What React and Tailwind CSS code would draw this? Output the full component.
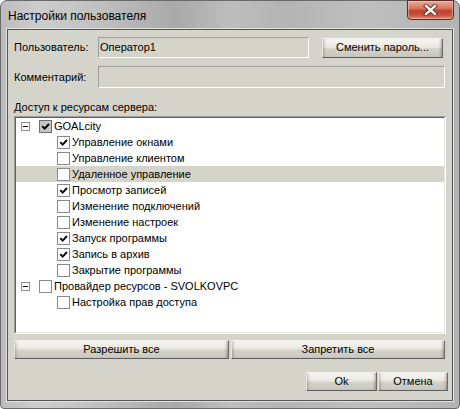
import React from "react";

function Check({ state }) {
  if (state === "gray") {
    return (
      <span className="w-[13px] h-[13px] shrink-0 border border-[#6e6e6e] bg-[#c6c6c6] flex items-center justify-center">
        <svg width="9" height="9" viewBox="0 0 9 9">
          <path d="M1.2 4.2 L3.6 6.6 L8 2" stroke="#000" strokeWidth="1.9" fill="none" />
        </svg>
      </span>
    );
  }
  if (state === "on") {
    return (
      <span className="w-[13px] h-[13px] shrink-0 border border-[#8a8a8a] bg-white flex items-center justify-center">
        <svg width="9" height="9" viewBox="0 0 9 9">
          <path d="M1.2 4.2 L3.6 6.6 L8 2" stroke="#000" strokeWidth="1.9" fill="none" />
        </svg>
      </span>
    );
  }
  return <span className="w-[13px] h-[13px] shrink-0 border border-[#8a8a8a] bg-white" />;
}

function Expander() {
  return (
    <span className="relative w-[9px] h-[9px] shrink-0 border border-[#8f8f8f] bg-white">
      <span className="absolute left-[1px] top-[3px] w-[5px] h-[1px] bg-black" />
    </span>
  );
}

function Row({ level, state, label, hl }) {
  return (
    <div className={hl ? "h-[16px] flex items-center bg-[#d5d4cb]" : "h-[16px] flex items-center"}>
      {level === 0 ? (
        <>
          <span className="w-[5px]" />
          <Expander />
          <span className="w-[9px]" />
          <Check state={state} />
        </>
      ) : (
        <>
          <span className="w-[41px]" />
          <Check state={state} />
        </>
      )}
      <span className="ml-[2px] text-[11px] leading-[13px] text-black whitespace-nowrap">{label}</span>
    </div>
  );
}

function Btn({ children, className }) {
  return (
    <div
      className={
        "flex items-center justify-center text-[11px] leading-[13px] text-black border border-t-[#f4f4f0] border-l-[#e8e8e2] border-b-[#5e5e5e] border-r-[#6a6a6a] bg-[linear-gradient(to_bottom,#f6f5f1_0%,#e9e8e1_45%,#d3d2c8_55%,#c9c8be_100%)] shadow-[inset_3px_0_3px_-2px_rgba(0,0,0,0.25),inset_-3px_0_3px_-2px_rgba(0,0,0,0.35)] " +
        className
      }
    >
      {children}
    </div>
  );
}

function Field({ className, children }) {
  return (
    <div
      className={
        "border border-t-[#9d9d9d] border-l-[#9d9d9d] border-b-white border-r-white bg-[#d5d4cb] flex items-center pl-[1px] text-[11px] leading-[13px] text-black " +
        className
      }
    >
      {children}
    </div>
  );
}

export default function App() {
  const rows = [
    { level: 0, state: "gray", label: "GOALcity" },
    { level: 1, state: "on", label: "Управление окнами" },
    { level: 1, state: "off", label: "Управление клиентом" },
    { level: 1, state: "off", label: "Удаленное управление", hl: true },
    { level: 1, state: "on", label: "Просмотр записей" },
    { level: 1, state: "off", label: "Изменение подключений" },
    { level: 1, state: "off", label: "Изменение настроек" },
    { level: 1, state: "on", label: "Запуск программы" },
    { level: 1, state: "on", label: "Запись в архив" },
    { level: 1, state: "off", label: "Закрытие программы" },
    { level: 0, state: "off", label: "Провайдер ресурсов - SVOLKOVPC" },
    { level: 1, state: "off", label: "Настройка прав доступа" },
  ];

  return (
    <div className="w-[460px] h-[409px] font-['Liberation_Sans',Arial,sans-serif] bg-white">
      <div className="w-[460px] h-[409px] rounded-t-[7px] rounded-b-[4px] border border-[#6a6a6a] bg-[linear-gradient(to_right,#bcbcbc_0%,#cdcdcd_8%,#c2c2c2_20%,#a9a9a9_38%,#bdbdbd_50%,#b4b4b4_62%,#bfbfbf_80%,#b3b3b3_100%)] flex flex-col">
        <div className="h-[28px] flex items-start justify-between">
          <span className="pl-[7px] pt-[8px] text-[12px] leading-[15px] text-black">Настройки пользователя</span>
          <div className="mr-[5px] -mt-[1px] w-[47px] h-[20px] rounded-b-[4px] border border-[#5b2b22] bg-[linear-gradient(to_bottom,#e9a899_0%,#d9785f_40%,#c2402a_55%,#c9553c_80%,#dc8a6d_100%)] flex items-center justify-center shadow-[inset_0_0_0_1px_rgba(255,220,210,0.45)]">
            <svg width="15" height="12" viewBox="0 0 15 12">
              <path d="M3 2 L12 10 M12 2 L3 10" stroke="#4a2a22" strokeWidth="4.2" strokeLinecap="square" />
              <path d="M3 2 L12 10 M12 2 L3 10" stroke="#ffffff" strokeWidth="2.4" strokeLinecap="square" />
            </svg>
          </div>
        </div>
        <div className="mx-[6px] h-[372px] border border-[#535353] bg-[#d5d4cb] flex flex-col shadow-[0_0_0_1px_#e4e4e4]">
          <div className="mt-[7px] pl-[6px] flex items-center">
            <span className="w-[84px] text-[11px] leading-[13px] text-black">Пользователь:</span>
            <Field className="w-[211px] h-[21px]">Оператор1</Field>
            <Btn className="ml-[13px] w-[121px] h-[20px]">Сменить пароль...</Btn>
          </div>
          <div className="mt-[8px] pl-[6px] flex items-center">
            <span className="w-[84px] text-[11px] leading-[13px] text-black">Комментарий:</span>
            <Field className="w-[347px] h-[22px]" />
          </div>
          <div className="mt-[13px] pl-[6px] text-[11px] leading-[13px] text-black">Доступ к ресурсам сервера:</div>
          <div className="mt-[2px] ml-[6px] w-[432px] h-[218px] border border-t-[#9d9d9d] border-l-[#9d9d9d] border-b-white border-r-white">
            <div className="w-full h-full border border-t-[#5f5f5f] border-l-[#5f5f5f] border-b-[#e6e5de] border-r-[#e6e5de] bg-white">
              {rows.map((r, i) => (
                <Row key={i} {...r} />
              ))}
            </div>
          </div>
          <div className="mt-[6px] ml-[6px] flex gap-[2px]">
            <Btn className="w-[215px] h-[19px]">Разрешить все</Btn>
            <Btn className="w-[214px] h-[19px]">Запретить все</Btn>
          </div>
          <div className="mt-[13px] pr-[4px] flex justify-end gap-[1px]">
            <Btn className="w-[71px] h-[19px]">Ok</Btn>
            <Btn className="w-[70px] h-[19px]">Отмена</Btn>
          </div>
        </div>
      </div>
    </div>
  );
}
